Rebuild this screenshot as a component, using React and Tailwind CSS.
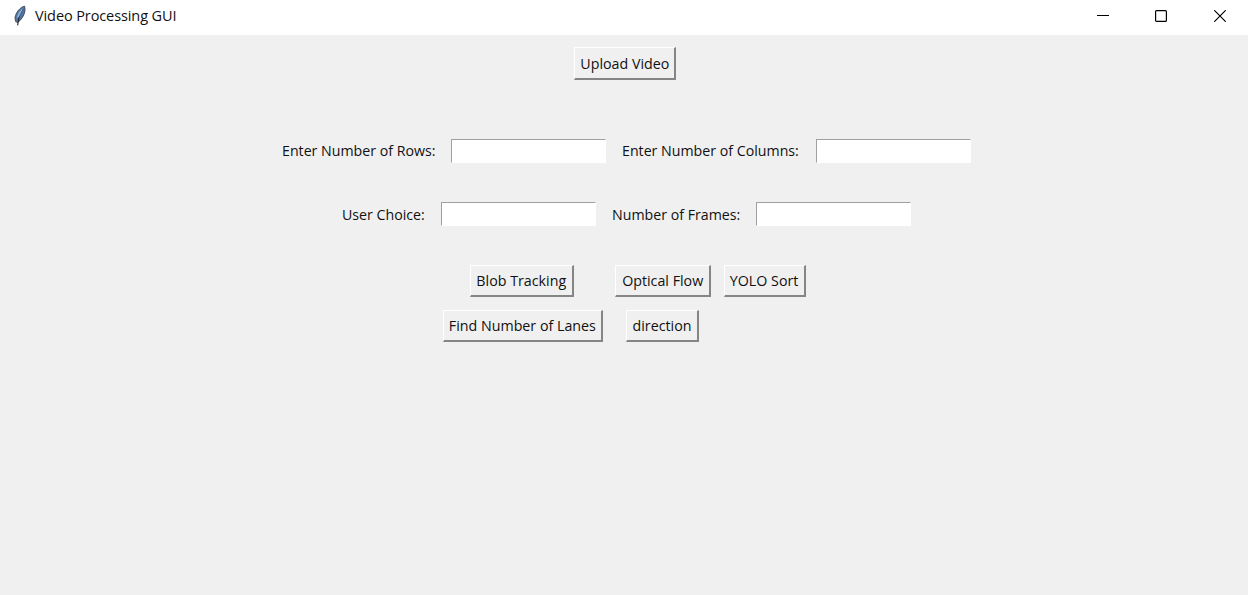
import React from "react";

function TkButton({ children, className }) {
  return (
    <button
      className={`flex shrink-0 items-center justify-center whitespace-nowrap border-t border-l border-r-2 border-b-2 border-t-white border-l-white border-r-[#858585] border-b-[#858585] bg-[#f0f0f0] ${className}`}
    >
      <span className="inline-block origin-center scale-x-[0.95]">{children}</span>
    </button>
  );
}

function Entry() {
  return (
    <input
      type="text"
      className="h-6 w-[155px] shrink-0 border border-t-[#a0a0a0] border-l-[#a0a0a0] border-r-white border-b-white bg-white outline-none"
    />
  );
}

function Label({ children, className }) {
  return (
    <label className={`shrink-0 whitespace-nowrap ${className}`}>
      <span className="inline-block origin-left scale-x-[0.946]">{children}</span>
    </label>
  );
}

function FeatherIcon() {
  return (
    <svg className="ml-[13px] h-[22px] w-[14px] shrink-0" viewBox="0 0 14 22" fill="none">
      <path d="M11.6 1.2C7.5 1.8 3 7 2 12.5L2.6 16.5L4.5 17.5C8.5 15 13.5 8 11.6 1.2Z" fill="#56779e" stroke="#30343c" strokeWidth="0.8" />
      <path d="M10.4 3C7 5 4.4 9 3.8 13.6C7 11.5 10 7.5 10.4 3Z" fill="#8fb2de" />
      <path d="M10.5 3.5C8.5 8 6.5 11 5.1 15" stroke="#2f5c94" strokeWidth="1.1" />
      <path d="M6 12.5L4.6 20.3" stroke="#27282c" strokeWidth="1.1" />
    </svg>
  );
}

export default function App() {
  return (
    <div className="flex h-[595px] w-[1248px] flex-col overflow-hidden bg-[#f0f0f0] font-['Open_Sans','Noto_Sans',sans-serif] text-[15px] leading-5 text-[#111]">
      <header className="flex h-[35px] items-center bg-white pb-[3px]">
        <FeatherIcon />
        <h1 className="ml-2 text-[14.5px] tracking-[-0.1px]">Video Processing GUI</h1>
        <div className="ml-auto flex items-center text-black">
          <button aria-label="Minimize" className="flex w-[58px] justify-center">
            <svg width="12" height="12" viewBox="0 0 12 12"><path d="M0 5.5H12" stroke="currentColor" /></svg>
          </button>
          <button aria-label="Maximize" className="flex w-[58px] justify-center">
            <svg width="12" height="12" viewBox="0 0 12 12" fill="none"><rect x="0.6" y="0.6" width="10.8" height="10.8" rx="1" stroke="currentColor" strokeWidth="1.2" /></svg>
          </button>
          <button aria-label="Close" className="flex w-[58px] justify-center pl-0.5">
            <svg width="12" height="12" viewBox="0 0 12 12"><path d="M0.3 0.3L11.7 11.7M11.7 0.3L0.3 11.7" stroke="currentColor" strokeWidth="1.2" /></svg>
          </button>
        </div>
      </header>
      <main className="flex flex-col">
        <div className="mt-3 flex pl-[574px]">
          <TkButton className="h-[33px] w-[102px]">Upload Video</TkButton>
        </div>
        <div className="mt-[59px] flex items-center pl-[282px]">
          <Label className="w-[169px] pb-[3px]">Enter Number of Rows:</Label>
          <Entry />
          <Label className="ml-4 w-[194px] pb-[3px]">Enter Number of Columns:</Label>
          <Entry />
        </div>
        <div className="mt-[39px] flex items-center pl-[342px]">
          <Label className="w-[99px] pb-px">User Choice:</Label>
          <Entry />
          <Label className="ml-4 w-[144px] pb-px">Number of Frames:</Label>
          <Entry />
        </div>
        <div className="mt-[39px] flex pl-[470px]">
          <TkButton className="h-8 w-[104px] pb-0.5">Blob Tracking</TkButton>
          <TkButton className="ml-[41px] h-8 w-[96px] pb-0.5">Optical Flow</TkButton>
          <TkButton className="ml-[13px] h-8 w-[82px] pb-0.5">YOLO Sort</TkButton>
        </div>
        <div className="mt-[13px] flex pl-[443px]">
          <TkButton className="h-8 w-[160px] pb-0.5">Find Number of Lanes</TkButton>
          <TkButton className="ml-[23px] h-8 w-[73px] pb-0.5">direction</TkButton>
        </div>
      </main>
    </div>
  );
}
